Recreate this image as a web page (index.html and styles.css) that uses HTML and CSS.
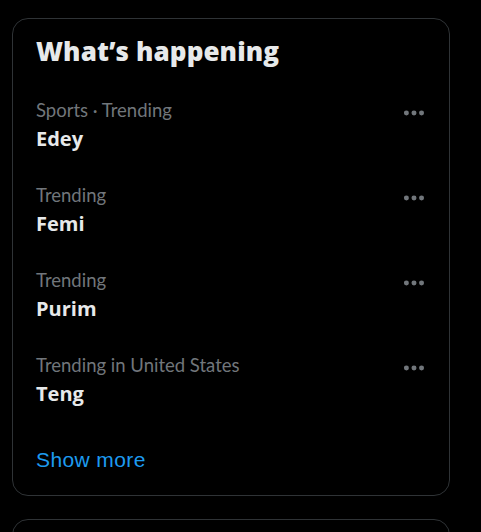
FILE: index.html
```html
<!DOCTYPE html>
<html>
<head>
<meta charset="utf-8">
<link rel="stylesheet" href="styles.css">
</head>
<body>
<section class="card">
  <h2 class="title">What’s happening</h2>
  <div class="trend">
    <div class="info"><div class="meta">Sports · Trending</div><div class="name">Edey</div></div>
    <svg class="more" viewBox="0 0 24 24"><circle cx="5" cy="12" r="2.3"/><circle cx="12" cy="12" r="2.3"/><circle cx="19" cy="12" r="2.3"/></svg>
  </div>
  <div class="trend">
    <div class="info"><div class="meta">Trending</div><div class="name">Femi</div></div>
    <svg class="more" viewBox="0 0 24 24"><circle cx="5" cy="12" r="2.3"/><circle cx="12" cy="12" r="2.3"/><circle cx="19" cy="12" r="2.3"/></svg>
  </div>
  <div class="trend">
    <div class="info"><div class="meta">Trending</div><div class="name">Purim</div></div>
    <svg class="more" viewBox="0 0 24 24"><circle cx="5" cy="12" r="2.3"/><circle cx="12" cy="12" r="2.3"/><circle cx="19" cy="12" r="2.3"/></svg>
  </div>
  <div class="trend">
    <div class="info"><div class="meta">Trending in United States</div><div class="name">Teng</div></div>
    <svg class="more" viewBox="0 0 24 24"><circle cx="5" cy="12" r="2.3"/><circle cx="12" cy="12" r="2.3"/><circle cx="19" cy="12" r="2.3"/></svg>
  </div>
  <a class="show" href="#">Show more</a>
</section>
<section class="card next"></section>
</body>
</html>
```
FILE: styles.css
```css
html, body {
  margin: 0;
  padding: 0;
  background: #000;
}
body {
  padding: 18px 0 0 12px;
  overflow: hidden;
  height: 532px;
  box-sizing: border-box;
}
.card {
  width: 438px;
  box-sizing: border-box;
  border: 1px solid #2f3336;
  border-radius: 16px;
  display: flex;
  flex-direction: column;
}
.title {
  margin: 0;
  padding: 16px 23px 16px 23px;
  font-family: "Open Sans", sans-serif;
  font-weight: 800;
  font-size: 26px;
  line-height: 32px;
  color: #e7e9ea;
  letter-spacing: 0.1px;
}
.trend {
  display: flex;
  justify-content: space-between;
  align-items: flex-start;
  height: 85px;
  box-sizing: border-box;
  padding: 15px 22px 16px 23px;
}
.info {
  display: flex;
  flex-direction: column;
  gap: 4px;
}
.meta {
  font-family: Lato, sans-serif;
  font-size: 18.5px;
  line-height: 24px;
  color: #71767b;
}
.name {
  font-family: "Open Sans", sans-serif;
  font-weight: 700;
  font-size: 20px;
  line-height: 26px;
  color: #e7e9ea;
}
.more {
  width: 26px;
  height: 26px;
  fill: #71767b;
  margin-top: 2px;
}
.show {
  display: block;
  padding: 22px 23px 20px;
  font-family: "Liberation Sans", Arial, sans-serif;
  font-size: 21px;
  line-height: 30px;
  letter-spacing: 0.4px;
  color: #1d9bf0;
  text-decoration: none;
}
.next {
  margin-top: 23px;
  height: 100px;
}
```
